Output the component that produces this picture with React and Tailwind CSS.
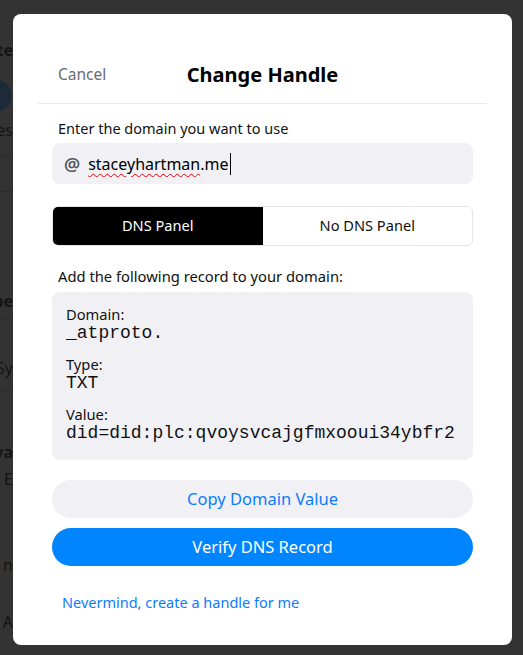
import { useState } from "react";

const sans = { fontFamily: '"Noto Sans", "Open Sans", sans-serif' };
const mono = { fontFamily: '"Liberation Mono", "Courier New", monospace' };

function Backdrop() {
  // the page under the modal, dimmed; only its left edge shows
  const rows = [
    { t: "ite", cls: "mt-[41px] font-bold" },
    { t: "", cls: "mt-[21px]", avatar: true },
    { t: "ces", cls: "mt-[9px]" },
    { t: "", cls: "mt-[16px] border-t border-[#2c2c2c]" },
    { t: "", cls: "mt-[18px] border-t border-[#2c2c2c]" },
    { t: "ope", cls: "mt-[83px] font-bold" },
    { t: "", cls: "mt-[8px] border-t border-[#2c2c2c]" },
    { t: "Sy", cls: "mt-[23px] text-[#1c1c1c]" },
    { t: "", cls: "mt-[13px] border-t border-[#2c2c2c]" },
    { t: "va", cls: "mt-[35px] font-bold" },
    { t: "E", cls: "mt-[9px]" },
    { t: "n", cls: "mt-[68px]" },
    { t: "A", cls: "mt-[39px]" },
    { t: "0", cls: "mt-[35px]" },
  ];
  return (
    <div className="w-[13px] shrink-0 overflow-hidden" style={sans}>
      {rows.map((r, i) =>
        r.avatar ? (
          <div key={i} className={`-ml-[20px] h-[32px] w-[32px] rounded-full bg-[#1d2a3a] ${r.cls}`} />
        ) : (
          <div key={i} className={`flex h-[18px] justify-end text-[16px] leading-[18px] text-[#141414] ${r.cls}`}>
            <span className="whitespace-nowrap">{r.t}</span>
          </div>
        )
      )}
    </div>
  );
}

function Field({ label, value }) {
  return (
    <div>
      <div className="text-[14.7px] leading-[18px] text-[#111]">{label}</div>
      <div className="text-[18px] leading-[20px] text-[#111]" style={mono}>
        {value}
      </div>
    </div>
  );
}

export default function App() {
  const [mode, setMode] = useState("dns");

  return (
    <div className="flex h-[655px] w-full overflow-hidden bg-[#333333]" style={sans}>
      <Backdrop />

      <div className="mt-[14px] flex h-[631px] w-[499px] shrink-0 flex-col rounded-lg bg-white">
        <div className="mx-[25px] flex items-center border-b border-[#e8e8ec] pb-[14px] pt-[47px]">
          <div className="relative flex h-[28px] w-full items-center justify-center">
            <button className="absolute left-[20px] text-[15.5px] text-[#6b6b70]">Cancel</button>
            <h1 className="text-[20px] font-bold text-black">Change Handle</h1>
          </div>
        </div>

        <div className="flex flex-col px-[39px] pt-[14px]">
          <div className="px-[6px] text-[14.5px] leading-[20px] text-[#111]">Enter the domain you want to use</div>

          <div className="mt-[5px] flex h-[41px] items-center gap-[8px] rounded-lg bg-[#f1f1f5] px-[12px]">
            <span className="text-[18px] font-semibold leading-none text-[#55555c]">@</span>
            <span className="flex items-center text-[16px] text-black">
              <span className="underline decoration-red-600 decoration-wavy decoration-1 underline-offset-[3px]">
                staceyhartman
              </span>
              .me
              <span className="ml-px inline-block h-[22px] w-px bg-black" />
            </span>
          </div>

          <div className="mt-[22px] flex h-[40px] overflow-hidden rounded-md border border-[#e5e5ea] text-[14.6px]">
            <button
              onClick={() => setMode("dns")}
              className={`flex-1 ${mode === "dns" ? "bg-black text-white" : "bg-white text-[#111]"}`}
            >
              DNS Panel
            </button>
            <button
              onClick={() => setMode("file")}
              className={`flex-1 ${mode === "file" ? "bg-black text-white" : "bg-white text-[#111]"}`}
            >
              No DNS Panel
            </button>
          </div>

          <div className="mt-[20px] px-[6px] text-[14.75px] leading-[20px] text-[#111]">
            Add the following record to your domain:
          </div>

          <div className="mt-[6px] flex h-[168px] flex-col gap-[12px] rounded-lg bg-[#f1f1f5] px-[14px] pt-[13px]">
            <Field label="Domain:" value="_atproto." />
            <Field label="Type:" value="TXT" />
            <Field label="Value:" value="did=did:plc:qvoysvcajgfmxooui34ybfr2" />
          </div>

          <button className="mt-[20px] h-[38px] rounded-full bg-[#f1f1f5] text-[16.5px] text-[#0a7cff]">
            Copy Domain Value
          </button>
          <button className="mt-[10px] h-[38px] rounded-full bg-[#0085ff] text-[16.5px] text-white">
            Verify DNS Record
          </button>

          <button className="mt-[26px] self-start px-[10px] text-[14.5px] leading-[20px] text-[#0a7cff]">
            Nevermind, create a handle for me
          </button>
        </div>
      </div>
    </div>
  );
}
